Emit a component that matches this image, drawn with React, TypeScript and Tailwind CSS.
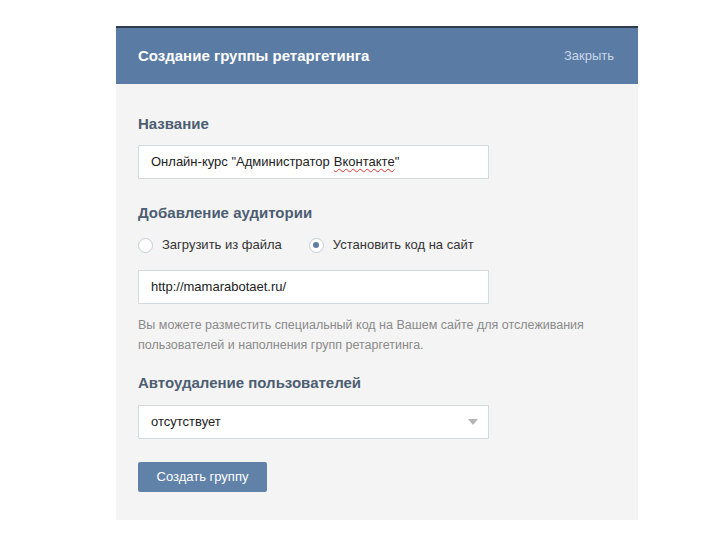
import React from 'react';

const font = { fontFamily: '"Liberation Sans", Arial, sans-serif' };

function Radio({ checked, label }: { checked?: boolean; label: string }) {
  return (
    <label className="flex h-[18px] items-center gap-[9px] text-[13px] leading-[18px] text-[#333]">
      <span className="flex h-[15px] w-[15px] items-center justify-center rounded-full border border-[#c5cdd6] bg-white">
        {checked && <span className="h-[6px] w-[6px] rounded-full bg-[#5f7d9d]" />}
      </span>
      {label}
    </label>
  );
}

export default function App() {
  return (
    <div className="min-h-[540px] w-[720px] bg-white pt-[26px]" style={font}>
      <div className="ml-[116px] w-[522px] bg-[#f4f4f4]">
        <div className="flex h-[58px] items-center justify-between border-t-2 border-[#2e3c4e] bg-[#5a7ba3] pl-[22px] pr-[24px]">
          <span className="text-[15px] font-bold text-white">Создание группы ретаргетинга</span>
          <span className="text-[13px] text-[#c9d7e8]">Закрыть</span>
        </div>

        <div className="flex flex-col px-[22px] pb-[28px] pt-[31px]">
          <h2 className="text-[15px] font-bold leading-[18px] text-[#4d5d72]">Название</h2>
          <div className="mt-[12px] flex h-[34px] w-[351px] items-center border border-[#d3d9de] bg-white px-[12px] text-[13px] text-[#222]">
            Онлайн-курс "Администратор{' '}
            <span className="ml-[4px] underline decoration-[#d33] decoration-wavy decoration-1 underline-offset-2">Вконтакте</span>"
          </div>

          <h2 className="mt-[25px] text-[15px] font-bold leading-[18px] text-[#4d5d72]">Добавление аудитории</h2>
          <div className="mt-[14px] flex items-center gap-[27px]">
            <Radio label="Загрузить из файла" />
            <Radio checked label="Установить код на сайт" />
          </div>
          <div className="mt-[16px] flex h-[34px] w-[351px] items-center border border-[#d3d9de] bg-white px-[12px] text-[13px] text-[#222]">
            http://mamarabotaet.ru/
          </div>
          <p className="mt-[11px] text-[12.5px] leading-[20px] text-[#8a8a8a]">
            Вы можете разместить специальный код на Вашем сайте для отслеживания
            <br />
            пользователей и наполнения групп ретаргетинга.
          </p>

          <h2 className="mt-[19px] text-[15px] font-bold leading-[18px] text-[#4d5d72]">Автоудаление пользователей</h2>
          <div className="mt-[13px] flex h-[34px] w-[351px] items-center justify-between border border-[#d3d9de] bg-white pl-[12px] pr-[10px] text-[13px] text-[#222]">
            отсутствует
            <svg width="10" height="6" viewBox="0 0 10 6">
              <path d="M0 0h10L5 6z" fill="#b5b5b5" />
            </svg>
          </div>

          <button className="mt-[23px] h-[30px] w-[129px] rounded-[2px] bg-[#6082a8] text-[13px] text-white">
            Создать группу
          </button>
        </div>
      </div>
    </div>
  );
}
